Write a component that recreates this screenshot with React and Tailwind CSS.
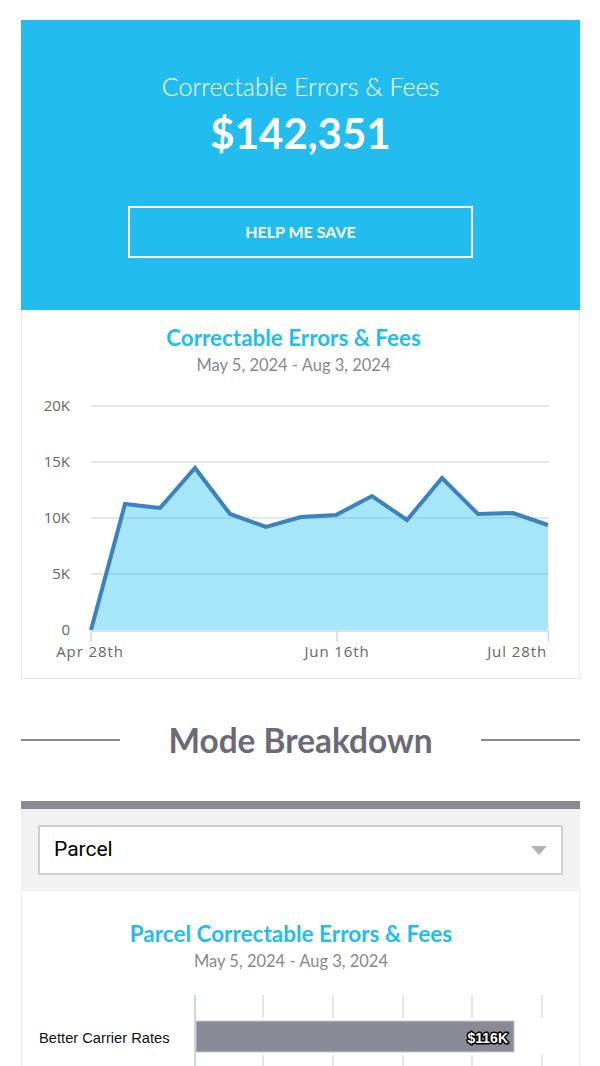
import React from "react";

const pts = [
  [91, 631], [125, 505], [160, 509], [195, 469], [230, 515], [266, 528], [301, 518],
  [336, 516], [372, 497], [407, 521], [442, 479], [478, 515], [513, 514], [548, 526],
];

function AreaChart() {
  const line = pts.map((p, i) => `${i ? "L" : "M"}${p[0]} ${p[1]}`).join(" ");
  const area = `${line} L548 631 L91 631 Z`;
  const grid = [
    [407, "20K"], [463, "15K"], [519, "10K"], [575, "5K"], [631, "0"],
  ];
  return (
    <svg width="557" height="290" viewBox="22 385 557 290" className="block">
      {grid.slice(0, 4).map(([y]) => (
        <line key={y} x1="91" x2="549" y1={y} y2={y} stroke="#e6e6e6" strokeWidth="2" />
      ))}
      <path d={area} fill="#22bdee" fillOpacity="0.4" />
      <path d={line} fill="none" stroke="#3a83c0" strokeWidth="4" strokeLinejoin="miter" />
      <line x1="91" x2="549" y1="632" y2="632" stroke="#ccd6eb" strokeWidth="1.5" />
      {[91, 337, 548.5].map((x) => (
        <line key={x} x1={x} x2={x} y1="632" y2="643" stroke="#ccd6eb" strokeWidth="1.5" />
      ))}
      <g fontFamily="'Open Sans', sans-serif" fontSize="15" fill="#666">
        {grid.map(([y, t]) => (
          <text key={t} x="70" y={y + 5} textAnchor="end">{t}</text>
        ))}
        <g letterSpacing="0.9">
          <text x="90" y="658" textAnchor="middle">Apr 28th</text>
          <text x="337" y="658" textAnchor="middle">Jun 16th</text>
          <text x="547" y="658" textAnchor="end">Jul 28th</text>
        </g>
      </g>
    </svg>
  );
}

function BarChart() {
  const xs = [263, 333, 403, 472, 542];
  return (
    <svg width="557" height="110" viewBox="22 985 557 110" className="block">
      {xs.map((x) => (
        <g key={x}>
          <line x1={x} x2={x} y1="995" y2="1018" stroke="#e6e6e6" strokeWidth="2" />
          <line x1={x} x2={x} y1="1055" y2="1095" stroke="#e6e6e6" strokeWidth="2" />
        </g>
      ))}
      <line x1="195" x2="195" y1="995" y2="1095" stroke="#ccd6eb" strokeWidth="2" />
      <rect x="196" y="1021" width="318" height="31" fill="#8a8a96" stroke="#c9c9d0" strokeWidth="1" />
      <text x="39" y="1043" fontFamily="'Liberation Sans', Arial, sans-serif" fontSize="14.7" fill="#111">
        Better Carrier Rates
      </text>
      <text
        x="508"
        y="1043"
        textAnchor="end"
        fontFamily="'Liberation Sans', Arial, sans-serif"
        fontSize="14"
        fontWeight="700"
        fill="#fff"
        stroke="#000"
        strokeWidth="3"
        strokeLinejoin="round"
        style={{ paintOrder: "stroke" }}
      >
        $116K
      </text>
    </svg>
  );
}

export default function App() {
  return (
    <div className="bg-white min-h-[1066px] pt-5 font-['Lato',sans-serif]">
      <div className="mx-[21px] w-[559px]">
        <div className="bg-[#22bdee] h-[290px] flex flex-col items-center pt-[52px] text-white">
          <div className="text-[25px] leading-[28px] font-light">Correctable Errors &amp; Fees</div>
          <div className="mt-[9px] text-[42px] leading-[48px] font-bold">$142,351</div>
          <button className="mt-[49px] w-[345px] h-[52px] border-2 border-white text-[16px] font-bold">
            HELP ME SAVE
          </button>
        </div>
        <div className="border border-t-0 border-[#e8e8e8] pt-[14px]">
          <div className="flex flex-col items-center pr-[14px]">
            <div className="text-[#22bdee] text-[22.4px] leading-[28px] font-bold">Correctable Errors &amp; Fees</div>
            <div className="mt-[3px] text-[#888891] text-[16.5px] leading-[20px]">May 5, 2024 - Aug 3, 2024</div>
          </div>
          <div className="mt-[9px] pb-[4px]">
            <AreaChart />
          </div>
        </div>

        <div className="mt-[43px] flex items-center justify-between h-[36px]">
          <div className="w-[99px] h-[2px] bg-[#8a8a93]" />
          <div className="text-[#6b6a77] text-[33.4px] font-bold leading-[36px]">Mode Breakdown</div>
          <div className="w-[99px] h-[2px] bg-[#8a8a93]" />
        </div>

        <div className="mt-[43px] border-t-8 border-[#8a8a94] bg-[#f2f2f2] px-[17px] py-4">
          <div className="h-[50px] bg-white border-2 border-[#cfcfcf] flex items-center justify-between pl-[14px] pr-[14px]">
            <span className="text-[21px] text-black font-['Roboto',sans-serif]">Parcel</span>
            <svg width="16" height="9" viewBox="0 0 16 9">
              <path d="M0 0 L16 0 L8 9 Z" fill="#b3b3b3" />
            </svg>
          </div>
        </div>
        <div className="border-x border-[#ececec] bg-white pt-[29px]">
          <div className="flex flex-col items-center pr-[19px]">
            <div className="text-[#22bdee] text-[22.5px] leading-[28px] font-bold">Parcel Correctable Errors &amp; Fees</div>
            <div className="mt-[3px] text-[#888891] text-[16.5px] leading-[20px]">May 5, 2024 - Aug 3, 2024</div>
          </div>
          <div className="mt-[14px]">
            <BarChart />
          </div>
        </div>
      </div>
    </div>
  );
}
